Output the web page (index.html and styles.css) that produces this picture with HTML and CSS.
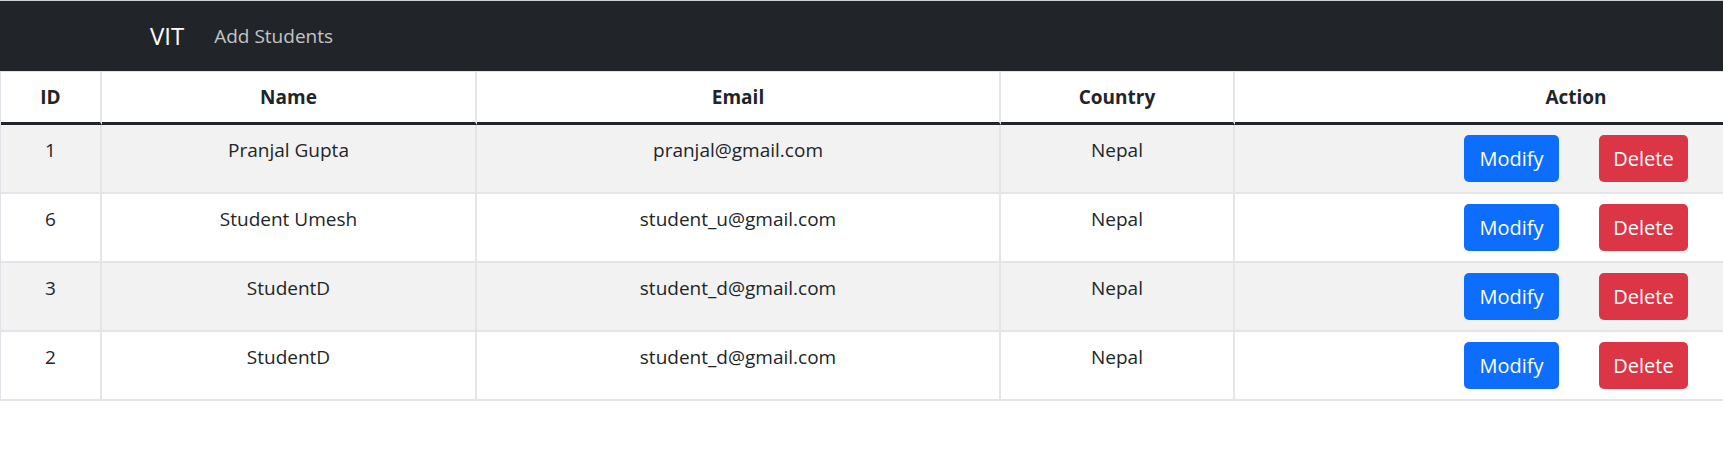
FILE: index.html
```html
<!DOCTYPE html>
<html lang="en">
<head>
<meta charset="utf-8">
<title>VIT Students</title>
<link rel="stylesheet" href="styles.css">
</head>
<body>
<nav class="navbar">
  <a class="brand" href="#">VIT</a>
  <a class="nav-link" href="#">Add Students</a>
</nav>
<div class="table-wrap">
  <table class="students">
    <colgroup>
      <col class="c-id"><col class="c-name"><col class="c-email"><col class="c-country"><col class="c-action">
    </colgroup>
    <thead>
      <tr><th>ID</th><th>Name</th><th>Email</th><th>Country</th><th>Action</th></tr>
    </thead>
    <tbody>
      <tr class="striped"><td>1</td><td>Pranjal Gupta</td><td>pranjal@gmail.com</td><td>Nepal</td><td><div class="actions"><button class="btn btn-primary">Modify</button><button class="btn btn-danger">Delete</button></div></td></tr>
      <tr><td>6</td><td>Student Umesh</td><td>student_u@gmail.com</td><td>Nepal</td><td><div class="actions"><button class="btn btn-primary">Modify</button><button class="btn btn-danger">Delete</button></div></td></tr>
      <tr class="striped"><td>3</td><td>StudentD</td><td>student_d@gmail.com</td><td>Nepal</td><td><div class="actions"><button class="btn btn-primary">Modify</button><button class="btn btn-danger">Delete</button></div></td></tr>
      <tr><td>2</td><td>StudentD</td><td>student_d@gmail.com</td><td>Nepal</td><td><div class="actions"><button class="btn btn-primary">Modify</button><button class="btn btn-danger">Delete</button></div></td></tr>
    </tbody>
  </table>
</div>
</body>
</html>
```
FILE: styles.css
```css
html, body {
  margin: 0;
  padding: 0;
  background: #ffffff;
}
body {
  font-family: "Open Sans", "Noto Sans", "Liberation Sans", sans-serif;
  font-size: 19px;
  line-height: 30px;
  color: #212529;
  border-top: 1px solid #cfd0d2;
}
.navbar {
  height: 70px;
  background: #212529;
  display: flex;
  align-items: center;
  padding-left: 150px;
  box-sizing: border-box;
}
.brand {
  color: #ffffff;
  text-decoration: none;
  font-size: 24px;
  line-height: 30px;
  margin-right: 20px;
}
.nav-link {
  color: #c3c5c7;
  text-decoration: none;
  font-size: 19px;
  padding: 0 10px;
}
.table-wrap {
  width: 100%;
  overflow: hidden;
}
.students {
  width: 1919px;
  table-layout: fixed;
  border-collapse: separate;
  border-spacing: 0;
  border-top: 1px solid #dee2e6;
  border-left: 1px solid #dee2e6;
}
.c-id { width: 101px; }
.c-name { width: 375px; }
.c-email { width: 524px; }
.c-country { width: 234px; }
.c-action { width: 684px; }
.students th,
.students td {
  text-align: center;
  vertical-align: top;
  padding: 10px;
  border-right: 2px solid #e3e5e8;
}
.students th {
  font-weight: 700;
  border-bottom: 3px solid #212529;
}
.students td {
  border-bottom: 2px solid #e3e5e8;
}
.students tr.striped td {
  background: #f2f2f2;
}
.actions {
  display: flex;
  justify-content: center;
  gap: 40px;
}
.btn {
  height: 47px;
  padding: 0;
  border: none;
  border-radius: 5px;
  color: #ffffff;
  font-family: inherit;
  font-size: 20px;
  line-height: 30px;
  cursor: pointer;
}
.btn-primary {
  width: 95px;
  background: #0d6efd;
}
.btn-danger {
  width: 89px;
  background: #dc3545;
}
```
